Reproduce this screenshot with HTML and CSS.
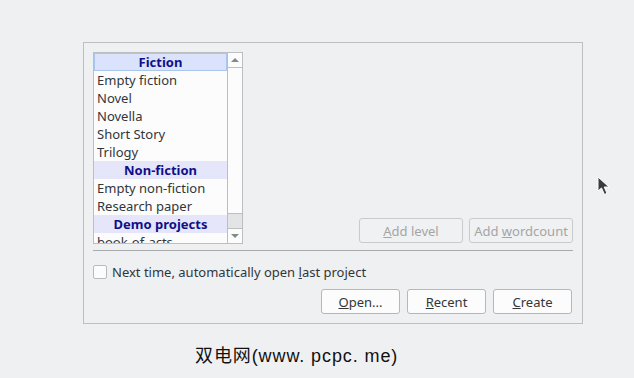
FILE: index.html
```html
<!DOCTYPE html>
<html lang="en">
<head>
    <meta charset="UTF-8">
    <title>Project templates</title>
    <link rel="stylesheet" href="styles.css">
</head>
<body>
    <div class="dialog">
        <div class="top">
            <div class="listbox">
                <ul class="list">
                    <li class="head selected">Fiction</li>
                    <li>Empty fiction</li>
                    <li>Novel</li>
                    <li>Novella</li>
                    <li>Short Story</li>
                    <li>Trilogy</li>
                    <li class="head">Non-fiction</li>
                    <li>Empty non-fiction</li>
                    <li>Research paper</li>
                    <li class="head">Demo projects</li>
                    <li>book-of-acts</li>
                </ul>
                <div class="scrollbar">
                    <div class="arrow up"></div>
                    <div class="track"><div class="thumb"></div></div>
                    <div class="arrow down"></div>
                </div>
            </div>
            <div class="levelbtns">
                <button class="btn" disabled><u>A</u>dd level</button>
                <button class="btn" disabled>Add <u>w</u>ordcount</button>
            </div>
        </div>
        <div class="sep"></div>
        <label class="check"><span class="box"></span><span>Next time, automatically open <u>l</u>ast project</span></label>
        <div class="actions">
            <button class="btn"><u>O</u>pen...</button>
            <button class="btn"><u>R</u>ecent</button>
            <button class="btn"><u>C</u>reate</button>
        </div>
    </div>
    <p class="mark">双电网(www. pcpc. me)</p>
    <svg class="cursor" width="14" height="20" viewBox="0 0 14 20">
        <path d="M1 1 L1 15 L4.5 12 L7.5 18.5 L10 17.3 L7.2 11 L12 11 Z" fill="#3b3b3b" stroke="#ffffff" stroke-width="1"/>
    </svg>
</body>
</html>
```

FILE: styles.css
```css
html{
    background-color: #eff0f1;
}
body{
    margin: 0;
    font-family: "Noto Sans", sans-serif;
    font-size: 13px;
    color: #31363b;
    position: relative;
    height: 378px;
}
.dialog{
    margin: 42px 0 0 83px;
    width: 480px;
    height: 262px;
    padding: 9px;
    border: 1px solid #bcbebf;
}
.top{
    display: flex;
    justify-content: space-between;
    align-items: flex-end;
}
.listbox{
    display: flex;
    width: 148px;
    height: 190px;
    border: 1px solid #bcbebf;
    background: #fcfcfc;
    overflow: hidden;
}
.list{
    list-style: none;
    margin: 0;
    padding: 0;
    flex: 1;
    overflow: hidden;
}
.list li{
    height: 18px;
    line-height: 18px;
    padding-left: 3px;
    white-space: nowrap;
}
.list .head{
    background: #e6e6fa;
    color: #0f0f8a;
    font-weight: bold;
    text-align: center;
    padding-left: 0;
}
.list .selected{
    background: #dbe3fc;
    box-shadow: inset 0 0 0 1px #a9c6ef;
}
.scrollbar{
    width: 14px;
    border-left: 1px solid #bcbebf;
    display: flex;
    flex-direction: column;
    background: #fcfcfc;
}
.arrow{
    height: 14px;
    position: relative;
}
.arrow.up{
    border-bottom: 1px solid #bcbebf;
}
.arrow.down{
    border-top: 1px solid #bcbebf;
}
.arrow::after{
    content: "";
    position: absolute;
    left: 3px;
    top: 5px;
    border-left: 4px solid transparent;
    border-right: 4px solid transparent;
}
.arrow.up::after{
    border-bottom: 4px solid #7f8c8d;
}
.arrow.down::after{
    border-top: 4px solid #7f8c8d;
}
.track{
    flex: 1;
    display: flex;
    flex-direction: column;
    justify-content: flex-end;
}
.thumb{
    height: 14px;
    background: #e3e4e5;
    border-top: 1px solid #bcbebf;
}
.levelbtns{
    display: flex;
    gap: 6px;
    margin-bottom: 1px;
}
.btn{
    font-family: "Noto Sans", sans-serif;
    font-size: 13px;
    color: #31363b;
    height: 25px;
    width: 104px;
    padding: 0;
    background: #fcfcfc;
    border: 1px solid #b5b7b9;
    border-radius: 3px;
}
.btn:disabled{
    color: #a3a5a6;
    background: #f0f1f2;
    border-color: #c8cacb;
}
.sep{
    height: 1px;
    background: #a8aaab;
    margin: 6px 0 0;
}
.check{
    display: flex;
    align-items: center;
    gap: 5px;
    margin-top: 13px;
    height: 15px;
    line-height: 14px;
}
.box{
    width: 12px;
    height: 12px;
    border: 1px solid #b9bbbd;
    border-radius: 2px;
    background: #fcfcfc;
}
.actions{
    display: flex;
    justify-content: flex-end;
    gap: 7px;
    margin-top: 10px;
    padding-right: 1px;
}
.actions .btn{
    width: 79px;
}
.mark{
    margin: 17px 0 0 195px;
    font-family: "Liberation Sans", "Noto Sans CJK SC", sans-serif;
    font-size: 18px;
    letter-spacing: 0.9px;
    color: #111;
}
.cursor{
    position: absolute;
    left: 597px;
    top: 176px;
}
```
